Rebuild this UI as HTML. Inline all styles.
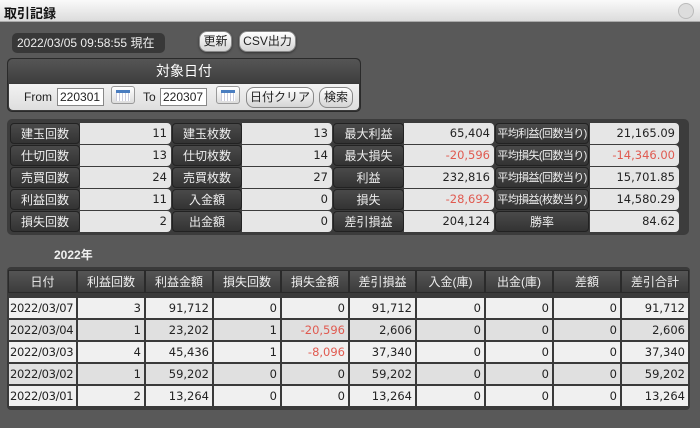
<!DOCTYPE html><html><head><meta charset="utf-8"><style>
*{margin:0;padding:0;box-sizing:border-box}
body{width:700px;height:428px;overflow:hidden;background:#595959;font-family:"Liberation Sans","Noto Sans CJK JP",sans-serif;position:relative;font-size:12px}
.a{position:absolute}
.title{left:0;top:0;width:700px;height:22px;background:linear-gradient(#fafafa,#dcdcdc);border-bottom:1px solid #aaa}
.title span{position:absolute;left:4px;top:3px;font-size:13px;font-weight:bold;color:#111}
.btn{background:linear-gradient(#fff,#d4d4d4);border:1px solid #888;border-radius:8px;color:#222;font-size:12px;text-align:center;line-height:19px;box-shadow:0 1px 2px #333}
.lab{background:linear-gradient(#4a4a4a,#333);color:#eee;text-align:center;border-radius:4px;border:1px solid #222;font-size:12px;line-height:20px;white-space:nowrap;overflow:hidden}
.val{background:#e6e6e6;color:#222;text-align:right;padding-right:4px;border-radius:0 4px 4px 0;font-family:"DejaVu Sans",sans-serif;font-size:11.5px;line-height:21px}
.th{background:linear-gradient(#555,#3c3c3c);color:#eee;text-align:center;font-size:12px;line-height:22px;border:1px solid #2a2a2a}
.td{color:#222;text-align:right;padding-right:3px;font-family:"DejaVu Sans",sans-serif;font-size:11.5px;line-height:21px;border:1px solid #3a3a3a;white-space:nowrap;overflow:hidden}
.a.red{color:#e05a50}
.cal{background:linear-gradient(#fff,#ddd);border:1px solid #999;border-radius:3px}
.cal i{position:absolute;left:4px;top:3px;width:14px;height:11px;border-top:3px solid #4a7dc0;background:repeating-linear-gradient(90deg,#ccd 0 1px,#fff 1px 3px)}
.inp{background:#fff;border:1px solid #888;font-size:12px;line-height:16px;padding-left:2px;color:#222}
</style></head><body>
<div class="a title"><span>取引記録</span>
<div class="a" style="left:678px;top:3px;width:16px;height:16px;border-radius:50%;background:#ddd;border:1px solid #bbb"></div></div>
<div class="a" style="left:12px;top:33px;width:153px;height:20px;background:#383838;border-radius:5px;color:#eee;font-size:12px;line-height:20px;padding-left:5px">2022/03/05 09:58:55 現在</div>
<div class="a btn" style="left:199px;top:31px;width:33px;height:21px">更新</div>
<div class="a btn" style="left:239px;top:31px;width:57px;height:21px">CSV出力</div>
<div class="a" style="left:7px;top:58px;width:354px;height:54px;background:#3a3a3a;border-radius:5px;border:1px solid #2a2a2a"></div>
<div class="a" style="left:8px;top:59px;width:352px;height:24px;background:linear-gradient(#555,#3e3e3e);border-radius:5px 5px 0 0;color:#fff;font-size:14px;text-align:center;line-height:24px">対象日付</div>
<div class="a" style="left:9px;top:84px;width:350px;height:26px;background:linear-gradient(#f2f2f2,#dedede);border-radius:0 0 4px 4px"></div>
<div class="a" style="left:24px;top:90px;color:#222">From</div>
<div class="a inp" style="left:57px;top:88px;width:47px;height:18px">220301</div>
<div class="a cal" style="left:111px;top:86px;width:24px;height:18px"><i></i></div>
<div class="a" style="left:143px;top:90px;color:#222">To</div>
<div class="a inp" style="left:160px;top:88px;width:47px;height:18px">220307</div>
<div class="a cal" style="left:216px;top:86px;width:24px;height:18px"><i></i></div>
<div class="a btn" style="left:246px;top:87px;width:68px;height:21px;box-shadow:none">日付クリア</div>
<div class="a btn" style="left:319px;top:87px;width:34px;height:21px;box-shadow:none">検索</div>

<div class="a" style="left:7px;top:119px;width:682px;height:116px;background:#3c3c3c;border-radius:5px"></div>
<div id="st"></div>
<div class="a" style="left:54px;top:246px;color:#f0f0f0;font-weight:bold;font-size:12px">2022年</div>
<div class="a" style="left:7px;top:267px;width:683px;height:143px;background:#3a3a3a;border-radius:4px"></div>
<div id="tb"></div>
<script>
var L=[[10,70],[172,70],[333,71],[495,94]],V=[[80,91],[242,90],[404,90],[590,89]];
var rows=[["建玉回数","11","建玉枚数","13","最大利益","65,404","平均利益(回数当り)","21,165.09"],
["仕切回数","13","仕切枚数","14","最大損失","-20,596","平均損失(回数当り)","-14,346.00"],
["売買回数","24","売買枚数","27","利益","232,816","平均損益(回数当り)","15,701.85"],
["利益回数","11","入金額","0","損失","-28,692","平均損益(枚数当り)","14,580.29"],
["損失回数","2","出金額","0","差引損益","204,124","勝率","84.62"]];
var h="";
rows.forEach(function(r,i){var y=123+i*22;for(var c=0;c<4;c++){
var st=(c==3&&r[6].length>3)?';font-size:11px;letter-spacing:-0.6px':'';
h+='<div class="a lab" style="left:'+L[c][0]+'px;top:'+y+'px;width:'+L[c][1]+'px;height:21px'+st+'">'+r[c*2]+'</div>';
var v=r[c*2+1];h+='<div class="a val'+(v[0]=="-"?" red":"")+'" style="left:'+V[c][0]+'px;top:'+y+'px;width:'+V[c][1]+'px;height:21px">'+v+'</div>';}});
document.getElementById("st").innerHTML=h;
var X=[8,77,145,213,281,349,416,485,553,621,689];
var H=["日付","利益回数","利益金額","損失回数","損失金額","差引損益","入金(庫)","出金(庫)","差額","差引合計"];
var D=[["2022/03/07","3","91,712","0","0","91,712","0","0","0","91,712"],
["2022/03/04","1","23,202","1","-20,596","2,606","0","0","0","2,606"],
["2022/03/03","4","45,436","1","-8,096","37,340","0","0","0","37,340"],
["2022/03/02","1","59,202","0","0","59,202","0","0","0","59,202"],
["2022/03/01","2","13,264","0","0","13,264","0","0","0","13,264"]];
h="";
for(var c=0;c<10;c++)h+='<div class="a th" style="left:'+X[c]+'px;top:270px;width:'+(X[c+1]-X[c])+'px;height:23px">'+H[c]+'</div>';
D.forEach(function(r,i){var y=297+i*22;for(var c=0;c<10;c++){var v=r[c];
var bg=(i%2==0)?"#f0f0f0":"#e0e0e0";
h+='<div class="a td'+(v[0]=="-"?" red":"")+'" style="left:'+X[c]+'px;top:'+y+'px;width:'+(X[c+1]-X[c])+'px;height:22px;background:'+bg+(c==0?';text-align:left;padding-left:1px;letter-spacing:-0.3px':'')+'">'+v+'</div>';}});
document.getElementById("tb").innerHTML=h;
</script>
</body></html>
